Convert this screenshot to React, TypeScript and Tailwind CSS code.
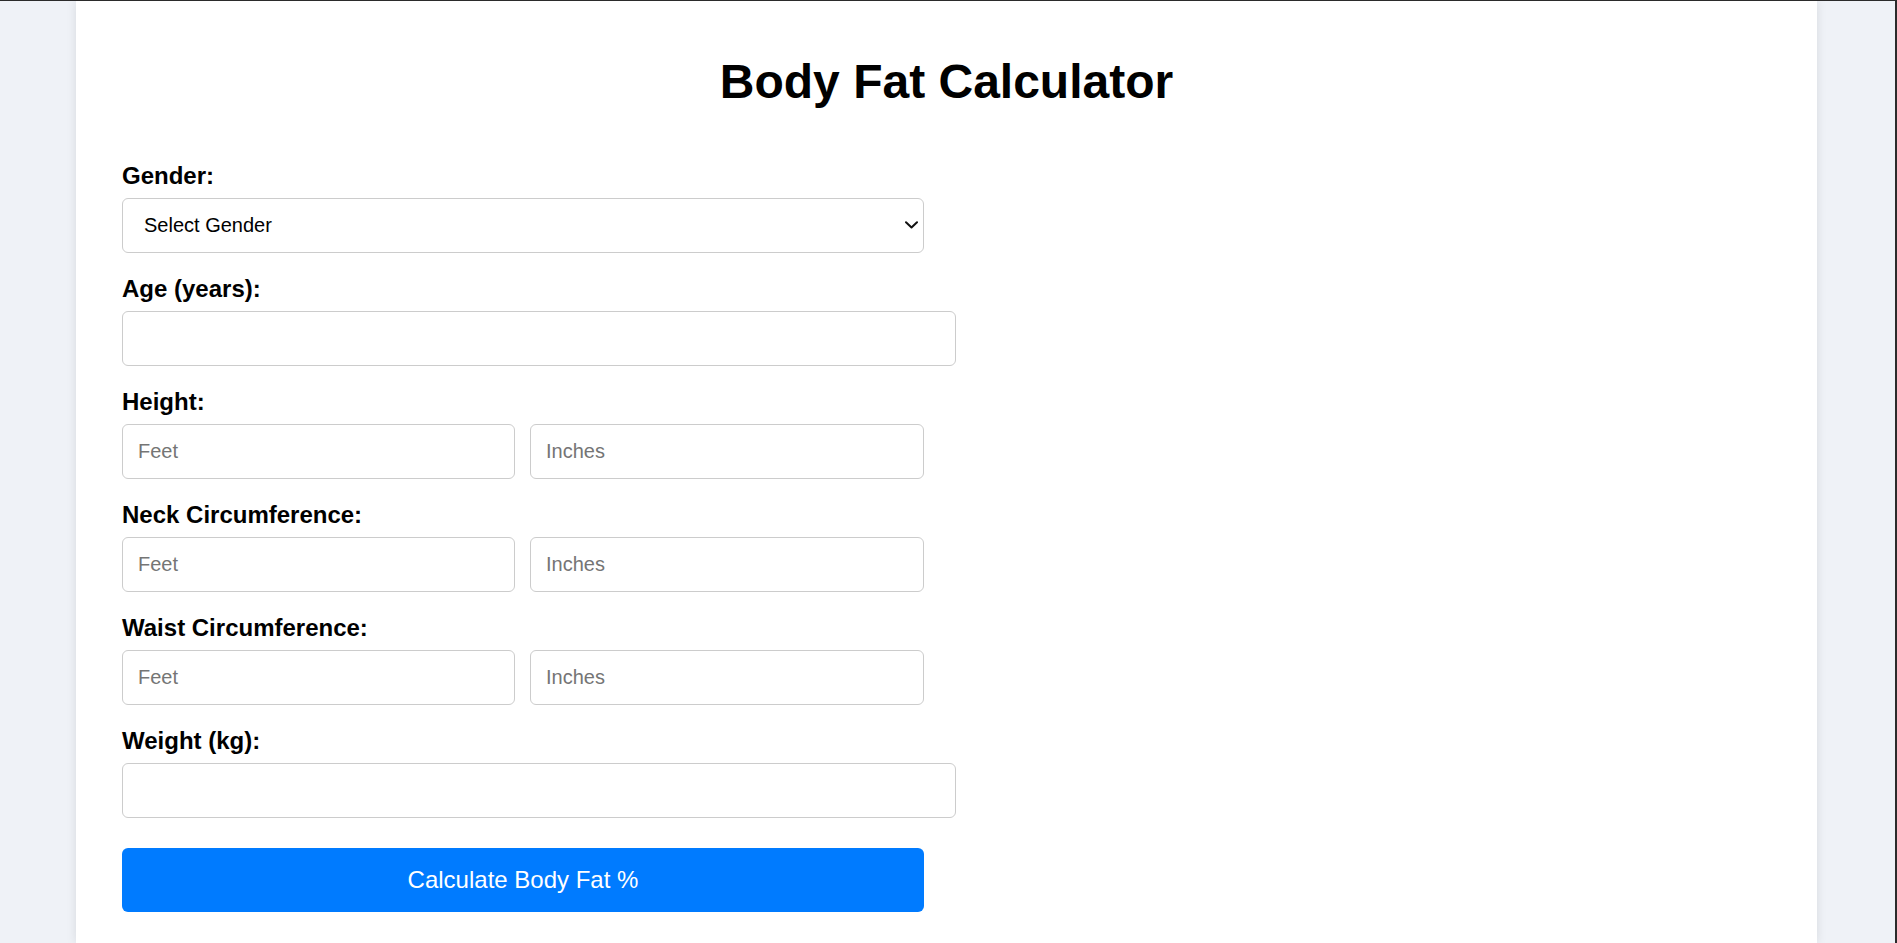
import React from "react";

const Label = ({ children }: { children: React.ReactNode }) => (
  <label className="block text-[24px] font-bold leading-[28px] mb-[8px] text-black">{children}</label>
);

const inputCls =
  "block h-[55px] border border-[#cccccc] rounded-[6px] bg-white px-[15px] text-[20px] text-black placeholder:text-[#757575] outline-none";

const Pair = () => (
  <div className="flex gap-[15px]">
    <input type="number" placeholder="Feet" className={inputCls + " w-[393px]"} />
    <input type="number" placeholder="Inches" className={inputCls + " w-[394px]"} />
  </div>
);

export default function App() {
  return (
    <div
      className="h-[943px] overflow-hidden bg-[#eff2f7] border-t border-t-[#2b2b2b] border-r-2 border-r-[#2b2b2b]"
      style={{ fontFamily: '"Liberation Sans", Arial, sans-serif' }}
    >
      <div className="ml-[76px] w-[1741px] h-full bg-white shadow-[0_0_10px_rgba(0,0,0,0.1)] px-[46px] pt-[53px]">
        <h1 className="text-center text-[48px] font-bold leading-[55px] text-black mb-[52.5px]">Body Fat Calculator</h1>
        <div className="w-[802px]">
          <div className="mb-[22px]">
            <Label>Gender:</Label>
            <div className="relative">
              <select className="block w-full h-[55px] appearance-none border border-[#cccccc] rounded-[6px] bg-white pl-[21px] pr-[30px] text-[20px] text-black outline-none">
                <option>Select Gender</option>
                <option>Male</option>
                <option>Female</option>
              </select>
              <svg
                className="pointer-events-none absolute right-[6px] top-1/2 -translate-y-1/2"
                width="13"
                height="8"
                viewBox="0 0 13 8"
                fill="none"
              >
                <path d="M1 1.2L6.5 6.5L12 1.2" stroke="#111" strokeWidth="2" strokeLinecap="round" strokeLinejoin="round" />
              </svg>
            </div>
          </div>
          <div className="mb-[22px]">
            <Label>Age (years):</Label>
            <input type="number" className={inputCls + " w-[834px]"} />
          </div>
          <div className="mb-[22px]">
            <Label>Height:</Label>
            <Pair />
          </div>
          <div className="mb-[22px]">
            <Label>Neck Circumference:</Label>
            <Pair />
          </div>
          <div className="mb-[22px]">
            <Label>Waist Circumference:</Label>
            <Pair />
          </div>
          <div className="mb-[30px]">
            <Label>Weight (kg):</Label>
            <input type="number" className={inputCls + " w-[834px]"} />
          </div>
          <button className="block w-full h-[64px] rounded-[6px] bg-[#007bff] text-white text-[24px]">
            Calculate Body Fat %
          </button>
        </div>
      </div>
    </div>
  );
}
